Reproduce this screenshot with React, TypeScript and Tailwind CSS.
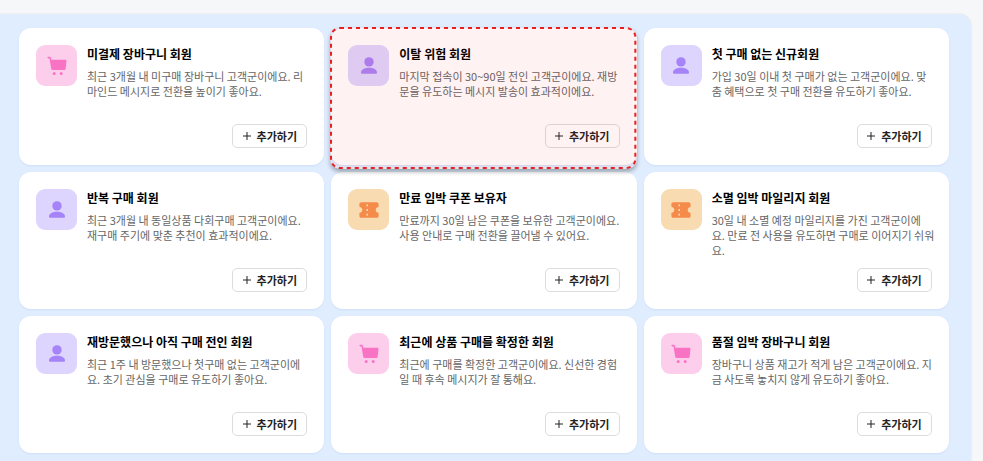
import { clsx } from "clsx";

type Kind = "cart" | "person" | "coupon";

type Segment = {
  kind: Kind;
  title: string;
  description: string;
  highlighted?: boolean;
};

const SEGMENTS: Segment[] = [
  {
    kind: "cart",
    title: "미결제 장바구니 회원",
    description: "최근 3개월 내 미구매 장바구니 고객군이에요. 리\n마인드 메시지로 전환율 높이기 좋아요.",
  },
  {
    kind: "person",
    title: "이탈 위험 회원",
    description: "마지막 접속이 30~90일 전인 고객군이에요. 재방\n문을 유도하는 메시지 발송이 효과적이에요.",
    highlighted: true,
  },
  {
    kind: "person",
    title: "첫 구매 없는 신규회원",
    description: "가입 30일 이내 첫 구매가 없는 고객군이에요. 맞\n춤 혜택으로 첫 구매 전환을 유도하기 좋아요.",
  },
  {
    kind: "person",
    title: "반복 구매 회원",
    description: "최근 3개월 내 동일상품 다회구매 고객군이에요.\n재구매 주기에 맞춘 추천이 효과적이에요.",
  },
  {
    kind: "coupon",
    title: "만료 임박 쿠폰 보유자",
    description: "만료까지 30일 남은 쿠폰을 보유한 고객군이에요.\n사용 안내로 구매 전환을 끌어낼 수 있어요.",
  },
  {
    kind: "coupon",
    title: "소멸 임박 마일리지 회원",
    description: "30일 내 소멸 예정 마일리지를 가진 고객군이에\n요. 만료 전 사용을 유도하면 구매로 이어지기 쉬워\n요.",
  },
  {
    kind: "person",
    title: "재방문했으나 아직 구매 전인 회원",
    description: "최근 1주 내 방문했으나 첫구매 없는 고객군이에\n요. 초기 관심을 구매로 유도하기 좋아요.",
  },
  {
    kind: "cart",
    title: "최근에 상품 구매를 확정한 회원",
    description: "최근에 구매를 확정한 고객군이에요. 신선한 경험\n일 때 후속 메시지가 잘 통해요.",
  },
  {
    kind: "cart",
    title: "품절 임박 장바구니 회원",
    description: "장바구니 상품 재고가 적게 남은 고객군이에요. 지\n금 사도록 놓치지 않게 유도하기 좋아요.",
  },
];

const TILE: Record<Kind, string> = {
  cart: "bg-[#fdceec] text-[#f973c5]",
  person: "bg-[#ddd5fe] text-[#a683f7]",
  coupon: "bg-[#f8dbb0] text-[#f58b4b]",
};

function KindIcon({ kind }: { kind: Kind }) {
  if (kind === "cart") {
    return (
      <svg viewBox="0 0 20 20" className="size-5" fill="currentColor" aria-hidden>
        <path d="M1.200.8h1.200c.8 0 1.300.4 1.500 1.100l.5 1.800h14.100c.7 0 1.100.5 1 1.100l-.8 7.600c-.1 1-.8 1.600-1.800 1.600H6.100c-1 0-1.700-.6-1.900-1.600L2.600 2.900c-.1-.4-.3-.5-.6-.5h-.8C.7 2.400.4 2 .4 1.600s.3-.8.8-.8z" />
        <circle cx="7.200" cy="17.400" r="1.500" />
        <circle cx="14.200" cy="17.400" r="1.500" />
      </svg>
    );
  }
  if (kind === "person") {
    return (
      <svg viewBox="0 0 20 20" className="size-5" fill="currentColor" aria-hidden>
        <circle cx="10" cy="5.900" r="4.700" />
        <path d="M2 16.500c0-3 3.600-4.800 8-4.800s8 1.800 8 4.800c0 .8-.5 1.300-1.300 1.300H3.300C2.500 17.800 2 17.300 2 16.500z" />
      </svg>
    );
  }
  return (
    <svg viewBox="0 0 20 20" className="size-5" aria-hidden>
      <path
        fill="currentColor"
        d="M2.300 2.200h15.400c1.100 0 1.900.8 1.900 1.900v3c-1.800.2-2.900 1.300-2.900 2.900s1.100 2.700 2.900 2.900v3c0 1.100-.8 1.900-1.900 1.900H2.300c-1.100 0-1.900-.8-1.900-1.900v-3c1.800-.2 2.900-1.300 2.900-2.900S2.200 7.300.4 7.100v-3c0-1.100.8-1.900 1.900-1.900z"
      />
      <path d="M8.200 4.400v1.800M8.200 9.100v1.800M8.200 13.800v1.800" stroke="#f8dbb0" strokeWidth="1.600" />
    </svg>
  );
}

// Dashed frame laid over the card that needs attention
function Highlight() {
  return (
    <div
      aria-hidden
      className="pointer-events-none absolute -top-px right-0 -bottom-1 -left-px z-10 rounded-[10px] bg-[#ff0000]/5 p-px shadow-[0_3px_4px_rgba(0,0,0,0.3)]"
    >
      <svg className="block size-full overflow-visible">
        <rect
          width="100%"
          height="100%"
          rx="9"
          fill="none"
          stroke="#e8201f"
          strokeWidth="2"
          strokeDasharray="4 4"
        />
      </svg>
    </div>
  );
}

function SegmentCard({ kind, title, description, highlighted }: Segment) {
  return (
    <li className="relative flex min-h-[137px] flex-col justify-between rounded-xl bg-white p-[17px] shadow-[0_1px_2px_rgba(30,64,175,0.08)]">
      <div className="flex gap-2.5">
        <div className={clsx("flex size-[41px] shrink-0 items-center justify-center rounded-[9px]", TILE[kind])}>
          <KindIcon kind={kind} />
        </div>
        <div className="-mr-2 min-w-0 flex-1">
          <h2 className="text-[12px] leading-[18px] font-bold text-black">{title}</h2>
          <p className="mt-1.5 text-[11px] leading-[15px] whitespace-pre-line text-[#666]">{description}</p>
        </div>
      </div>
      <button
        type="button"
        className="flex h-6 w-[75px] shrink-0 items-center justify-center gap-1.5 self-end rounded-[5px] border border-[#dcdcdf] bg-white text-[11px] font-bold text-[#222]"
      >
        <svg viewBox="0 0 8 8" className="size-2" stroke="currentColor" strokeWidth="1" aria-hidden>
          <path d="M4 0v8M0 4h8" />
        </svg>
        추가하기
      </button>
      {highlighted && <Highlight />}
    </li>
  );
}

export default function App() {
  return (
    <div className="flex min-h-screen flex-col bg-[#f6f7f9] pt-3.5 pr-3 font-['Noto_Sans_CJK_KR',sans-serif]">
      <main className="flex-1 rounded-tr-xl bg-[#e0edfe] pt-3.5 pr-[22px] pb-2 pl-[19px] shadow-[0_0_2px_rgba(0,0,0,0.12)]">
        <ul className="grid grid-cols-3 gap-[7px]">
          {SEGMENTS.map((segment) => (
            <SegmentCard key={segment.title} {...segment} />
          ))}
        </ul>
      </main>
    </div>
  );
}
